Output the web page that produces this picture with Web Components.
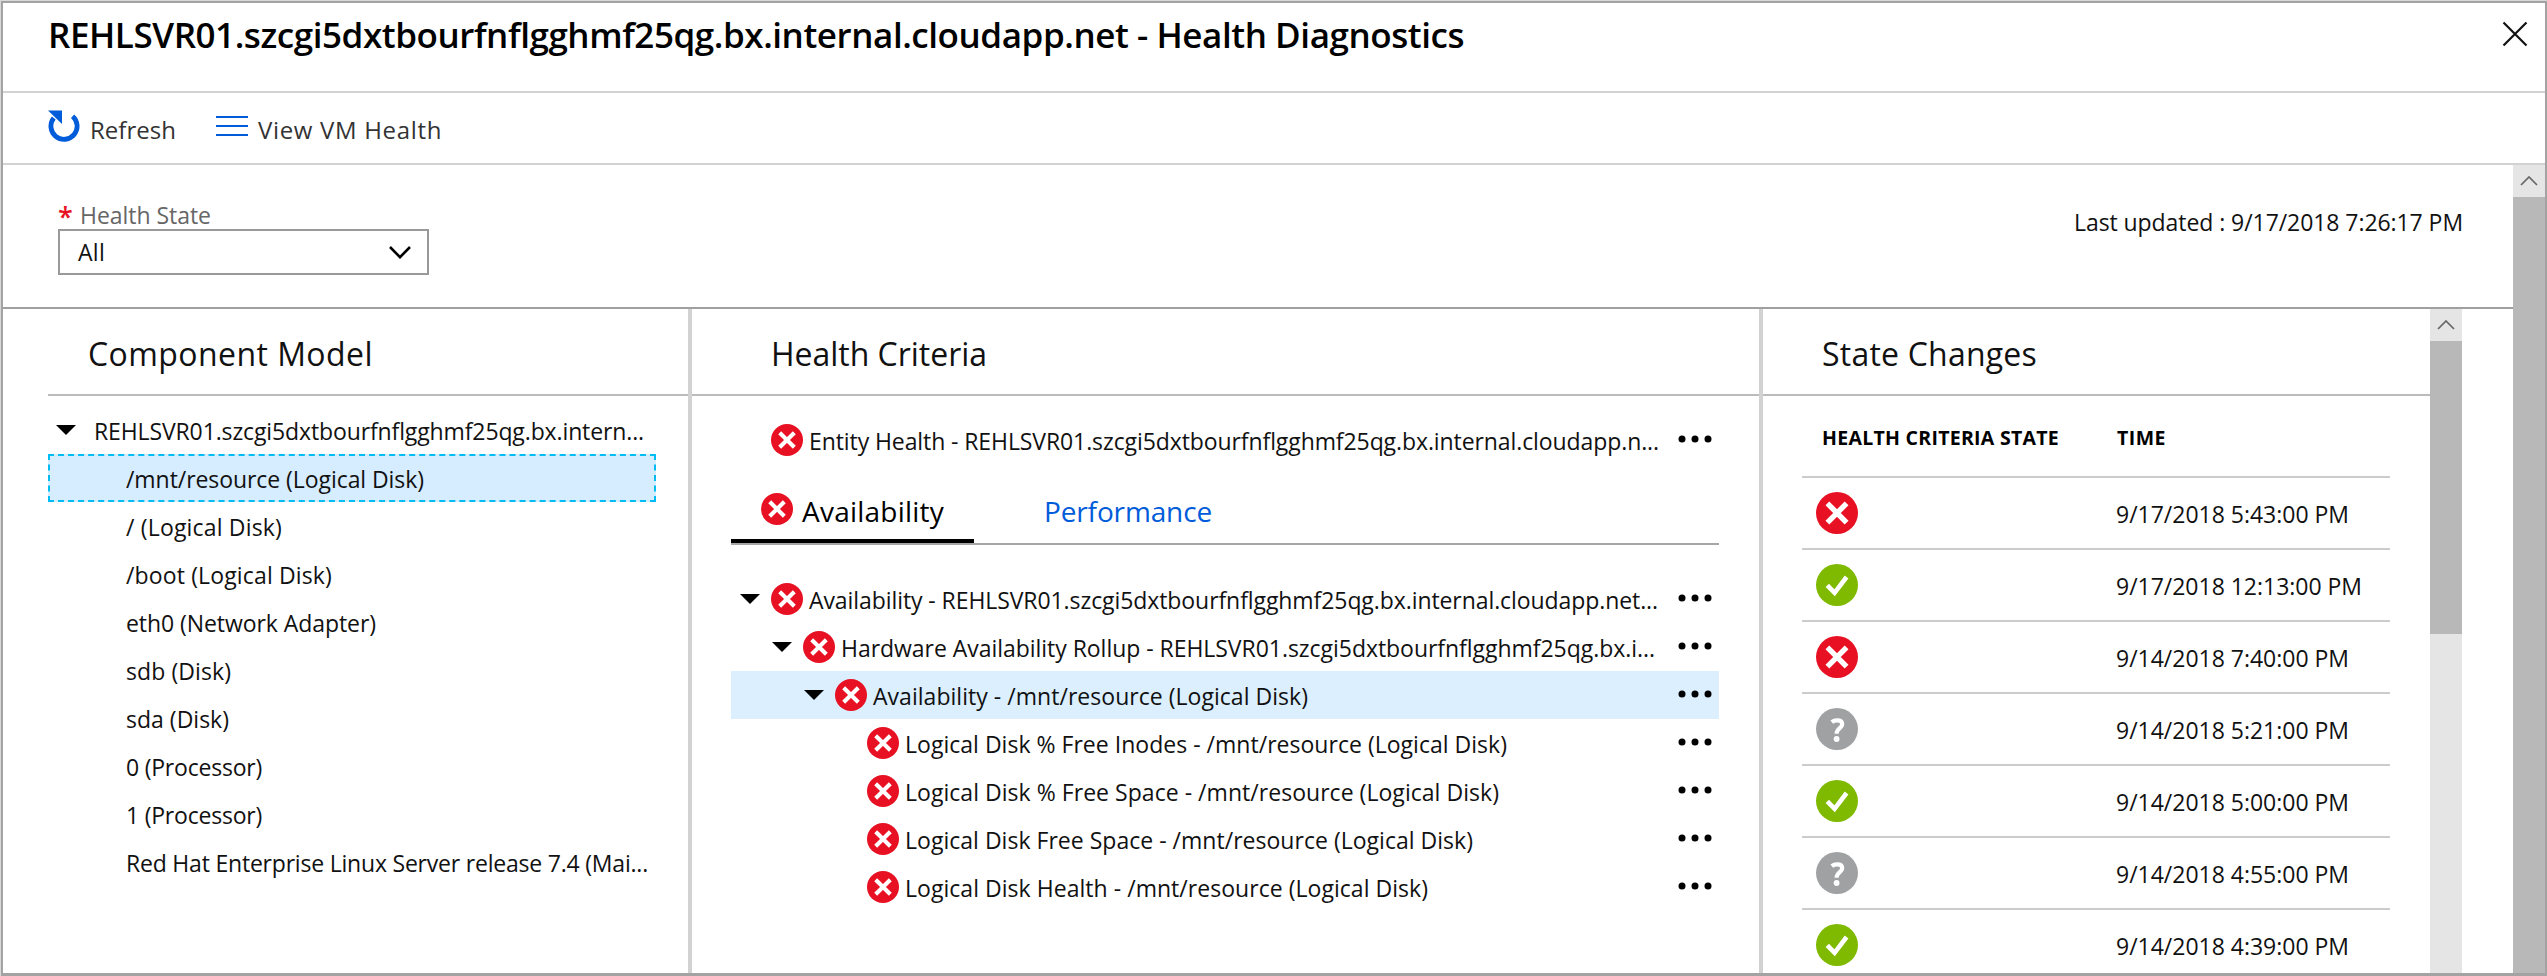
<!DOCTYPE html>
<html lang="en">
<head>
<meta charset="utf-8">
<title>Health Diagnostics</title>
<style>
html, body { margin: 0; padding: 0; background: #fff; }
body { width: 2547px; height: 976px; overflow: hidden; font-family: "Open Sans", "Noto Sans", sans-serif; color: #111; }
</style>
</head>
<body>
<health-blade></health-blade>
<script>
const pen = document.createElement('canvas').getContext('2d');

function define(name, render) {
  customElements.define(name, class extends HTMLElement {
    connectedCallback() {
      if (this.shadowRoot) return;
      const t = document.createElement('template');
      t.innerHTML = render(this, n => this.getAttribute(n));
      this.attachShadow({ mode: 'open' }).append(t.content.cloneNode(true));
    }
  });
}

/* Single-line label: `size`, `weight`, and `w`, the advance width its letters are spaced to fill. */
define('fit-label', (el, a) => {
  const size = +(a('size') || 23), weight = a('weight') || 400, text = el.textContent, w = +a('w');
  pen.font = `${weight} ${size}px "Open Sans"`;
  const ls = w ? (w - pen.measureText(text).width) / text.length : 0;
  return `<style>:host{display:block;flex:none;white-space:pre;font-size:${size}px;font-weight:${weight};line-height:${a('lh') || 32}px;letter-spacing:${ls.toFixed(3)}px;color:${a('color') || '#111'}}</style><slot></slot>`;
});

define('status-icon', (el, a) => {
  const kind = a('kind') || 'error', s = a('size') || 32;
  const fill = { error: '#e81123', ok: '#7fba00', unknown: '#a0a1a2' }[kind];
  const mark = {
    error: '<path d="M11.4 11.4 30.6 30.6M30.6 11.4 11.4 30.6" stroke-width="5.4"/>',
    ok: '<path d="M11.3 21.3 18.6 28.8 30.6 13" stroke-width="4.6"/>',
    unknown: '<path d="M15.8 14.2C19 11.4 26.2 11.4 26.2 16.2 26.2 20.3 20.6 20 20.6 25.8" stroke-width="4.2"/><circle cx="20.6" cy="31" r="2.9" fill="#fff" stroke="none"/>'
  }[kind];
  return `<style>:host{display:block;flex:none;width:${s}px;height:${s}px}svg{display:block}</style>
  <svg width="${s}" height="${s}" viewBox="0 0 42 42" fill="none" stroke="#fff"><circle cx="21" cy="21" r="21" fill="${fill}" stroke="none"/>${mark}</svg>`;
});

define('more-dots', () => `<style>:host{display:block;flex:none;width:34px;height:8px}svg{display:block}</style>
  <svg width="34" height="8" fill="#000"><circle cx="4" cy="4" r="3.5"/><circle cx="17" cy="4" r="3.5"/><circle cx="30" cy="4" r="3.5"/></svg>`);

define('expand-arrow', () => `<style>:host{display:block;flex:none;width:20px;height:10px}svg{display:block}</style>
  <svg width="20" height="10"><path d="M0 0H20L10 10Z" fill="#000"/></svg>`);

define('scroll-bar', (el, a) => `<style>
  :host{display:flex;flex-direction:column;flex:none;width:32px;background:#e5e5e5}
  .up{height:32px;display:flex;align-items:center;justify-content:center}
  .thumb{background:#b8b8b8;${a('thumb') ? `height:${a('thumb')}px` : 'flex:1'}}
  </style><div class="up"><svg width="18" height="10" fill="none" stroke="#666" stroke-width="1.7"><path d="M1 9 9 1 17 9"/></svg></div><div class="thumb"></div>`);

define('panel-head', (el, a) => `<style>
  :host{display:block;height:85px;border-bottom:2px solid #bbb;margin-left:${a('inset') || 0}px}
  div{padding:25px 0 0 ${a('pad')}px}
  </style><div><fit-label size="32" lh="40" w="${a('w')}">${a('label')}</fit-label></div>`);

define('tree-item', (el, a) => {
  const sel = el.hasAttribute('selected');
  return `<style>
  :host{display:flex;align-items:center;height:48px;width:608px;box-sizing:border-box;
    ${sel ? 'background:#d6ecff;border:2px dashed #00bcf2;' : 'border:2px solid transparent;'}padding-left:${a('pad')}px}
  expand-arrow{margin:-1px 18px 0 0}
  fit-label{margin-top:1px}
  </style>${el.hasAttribute('open') ? '<expand-arrow></expand-arrow>' : ''}<fit-label w="${a('w')}">${a('label')}</fit-label>`;
});

define('criteria-item', (el, a) => `<style>
  :host{display:flex;align-items:center;height:48px;width:988px;box-sizing:border-box;${el.hasAttribute('selected') ? 'background:#dbeffe;' : ''}padding-left:${a('pad')}px}
  .slot{width:31px;flex:none}
  fit-label{margin:2px 0 0 6px;flex:1}
  more-dots{margin:-3px 7px 0 0}
  </style><div class="slot">${el.hasAttribute('open') ? '<expand-arrow></expand-arrow>' : ''}</div>
  <status-icon></status-icon><fit-label w="${a('w')}">${a('label')}</fit-label><more-dots></more-dots>`);

define('state-row', (el, a) => `<style>
  :host{display:flex;align-items:center;height:70px;border-bottom:2px solid #ccc;padding-left:14px}
  fit-label{margin:1px 0 0 258px}
  </style><status-icon size="42" kind="${a('kind')}"></status-icon><fit-label w="${a('w') || 233}">${a('time')}</fit-label>`);

define('title-bar', () => `<style>
  :host{display:flex;justify-content:space-between;align-items:flex-start;height:88px;border-bottom:2px solid #d2d2d2}
  fit-label{margin:8px 0 0 45px}
  svg{margin:18px 17px 0 0}
  </style><fit-label size="35" weight="600" lh="48" w="1416" color="#000">REHLSVR01.szcgi5dxtbourfnflgghmf25qg.bx.internal.cloudapp.net - Health Diagnostics</fit-label>
  <svg width="26" height="26" fill="none" stroke="#111" stroke-width="2.2"><path d="M1.5 1.5 24.5 24.5M24.5 1.5 1.5 24.5"/></svg>`);

define('command-bar', () => `<style>
  :host{display:flex;align-items:center;height:70px;border-bottom:2px solid #d2d2d2;padding-left:45px}
  fit-label{margin-top:4px}
  .list{margin:-4px 10px 0 40px}
  .ref{margin:-3px 10px 0 0}
  </style>
  <svg class="ref" width="32" height="34" viewBox="0 0 32 34"><path d="M24.6 6.3A13.1 13.1 0 1 1 5.8 8" fill="none" stroke="#015cda" stroke-width="4.8"/><path d="M0 .5H14V14Z" fill="#015cda"/></svg>
  <fit-label w="86" size="24" color="#333">Refresh</fit-label>
  <svg class="list" width="32" height="22" fill="none" stroke="#015cda" stroke-width="2"><path d="M0 2H32M0 11H32M0 20H32"/></svg>
  <fit-label w="184" size="24" color="#333">View VM Health</fit-label>`);

define('filter-bar', () => `<style>
  :host{display:flex;justify-content:space-between;height:142px;border-bottom:2px solid #a0a0a0}
  .field{margin:34px 0 0 55px}
  .cap{display:flex;height:30px}
  .star{margin:2px 9px 0 0}
  .box{box-sizing:border-box;width:371px;height:46px;border:2px solid #999;display:flex;justify-content:space-between;align-items:center;padding:0 16px 0 18px}
  .when{margin:41px 50px 0 0}
  </style>
  <div class="field">
    <div class="cap"><fit-label class="star" size="27" weight="600" color="#e81123" w="13">*</fit-label><fit-label w="131" color="#666">Health State</fit-label></div>
    <div class="box"><fit-label w="27">All</fit-label><svg width="22" height="13" fill="none" stroke="#000" stroke-width="2.6"><path d="M1 1 11 11.2 21 1"/></svg></div>
  </div>
  <fit-label class="when" w="389">Last updated : 9/17/2018 7:26:17 PM</fit-label>`);

define('criteria-tabs', () => `<style>
  :host{display:flex;width:988px;height:62px;border-bottom:2px solid #a6a6a6}
  .tab{display:flex;height:58px}
  .on{width:243px;border-bottom:4px solid #000}
  .on status-icon{margin:12px 9px 0 30px}
  .on fit-label{margin-top:10px}
  .off fit-label{margin:10px 0 0 70px}
  </style>
  <div class="tab on"><status-icon></status-icon><fit-label size="28" lh="40" w="142" color="#000">Availability</fit-label></div>
  <div class="tab off"><fit-label size="28" lh="40" w="168" color="#015cda">Performance</fit-label></div>`);

define('health-blade', () => `<style>
  :host{display:block;width:2547px;height:976px;box-sizing:border-box;padding:1px 0 0 1px;background:#d8d8d8}
  .frame{box-sizing:border-box;width:2546px;height:975px;background:#fff;border:2px solid #a3a3a3;border-bottom-width:3px;display:flex;flex-direction:column;overflow:hidden}
  .body{flex:1;min-height:0;display:flex}
  .main{flex:1;display:flex;flex-direction:column;min-width:0}
  .panels{flex:1;min-height:0;display:flex}
  section{box-sizing:border-box;overflow:hidden}
  .model{width:689px;border-right:4px solid #d2d2d2}
  .criteria{width:1071px;border-right:4px solid #d2d2d2}
  .states{width:667px}
  .tree{padding:10px 0 0 45px}
  .crit{padding:20px 0 0 39px}
  .crit criteria-tabs{margin:17px 0 30px}
  .table{width:588px;margin-left:39px}
  .thead{display:flex;height:80px;border-bottom:2px solid #ccc;box-sizing:content-box}
  .thead fit-label{margin:26px 0 0 20px}
  .thead .time{margin-left:58px}
  </style>
  <div class="frame">
    <title-bar></title-bar>
    <command-bar></command-bar>
    <div class="body">
      <div class="main">
        <filter-bar></filter-bar>
        <div class="panels">
          <section class="model">
            <panel-head inset="45" pad="40" w="285" label="Component Model"></panel-head>
            <div class="tree">
              <tree-item open pad="6" w="550" label="REHLSVR01.szcgi5dxtbourfnflgghmf25qg.bx.intern..."></tree-item>
              <tree-item selected pad="76" w="298" label="/mnt/resource (Logical Disk)"></tree-item>
              <tree-item pad="76" w="156" label="/ (Logical Disk)"></tree-item>
              <tree-item pad="76" w="206" label="/boot (Logical Disk)"></tree-item>
              <tree-item pad="76" w="250" label="eth0 (Network Adapter)"></tree-item>
              <tree-item pad="76" w="105" label="sdb (Disk)"></tree-item>
              <tree-item pad="76" w="103" label="sda (Disk)"></tree-item>
              <tree-item pad="76" w="136" label="0 (Processor)"></tree-item>
              <tree-item pad="76" w="136" label="1 (Processor)"></tree-item>
              <tree-item pad="76" w="522" label="Red Hat Enterprise Linux Server release 7.4 (Mai..."></tree-item>
            </div>
          </section>
          <section class="criteria">
            <panel-head pad="79" w="216" label="Health Criteria"></panel-head>
            <div class="crit">
              <criteria-item pad="9" w="850" label="Entity Health - REHLSVR01.szcgi5dxtbourfnflgghmf25qg.bx.internal.cloudapp.n..."></criteria-item>
              <criteria-tabs></criteria-tabs>
              <criteria-item open pad="9" w="849" label="Availability - REHLSVR01.szcgi5dxtbourfnflgghmf25qg.bx.internal.cloudapp.net..."></criteria-item>
              <criteria-item open pad="41" w="814" label="Hardware Availability Rollup - REHLSVR01.szcgi5dxtbourfnflgghmf25qg.bx.i..."></criteria-item>
              <criteria-item open selected pad="73" w="435" label="Availability - /mnt/resource (Logical Disk)"></criteria-item>
              <criteria-item pad="105" w="602" label="Logical Disk % Free Inodes - /mnt/resource (Logical Disk)"></criteria-item>
              <criteria-item pad="105" w="594" label="Logical Disk % Free Space - /mnt/resource (Logical Disk)"></criteria-item>
              <criteria-item pad="105" w="568" label="Logical Disk Free Space - /mnt/resource (Logical Disk)"></criteria-item>
              <criteria-item pad="105" w="523" label="Logical Disk Health - /mnt/resource (Logical Disk)"></criteria-item>
            </div>
          </section>
          <section class="states">
            <panel-head pad="59" w="215" label="State Changes"></panel-head>
            <div class="table">
              <div class="thead"><fit-label size="19.5" weight="700" color="#000" w="237">HEALTH CRITERIA STATE</fit-label><fit-label class="time" size="19.5" weight="700" color="#000" w="49">TIME</fit-label></div>
              <state-row kind="error" time="9/17/2018 5:43:00 PM"></state-row>
              <state-row kind="ok" w="246" time="9/17/2018 12:13:00 PM"></state-row>
              <state-row kind="error" time="9/14/2018 7:40:00 PM"></state-row>
              <state-row kind="unknown" time="9/14/2018 5:21:00 PM"></state-row>
              <state-row kind="ok" time="9/14/2018 5:00:00 PM"></state-row>
              <state-row kind="unknown" time="9/14/2018 4:55:00 PM"></state-row>
              <state-row kind="ok" time="9/14/2018 4:39:00 PM"></state-row>
            </div>
          </section>
          <scroll-bar thumb="293"></scroll-bar>
        </div>
      </div>
      <scroll-bar></scroll-bar>
    </div>
  </div>`);
</script>
</body>
</html>
